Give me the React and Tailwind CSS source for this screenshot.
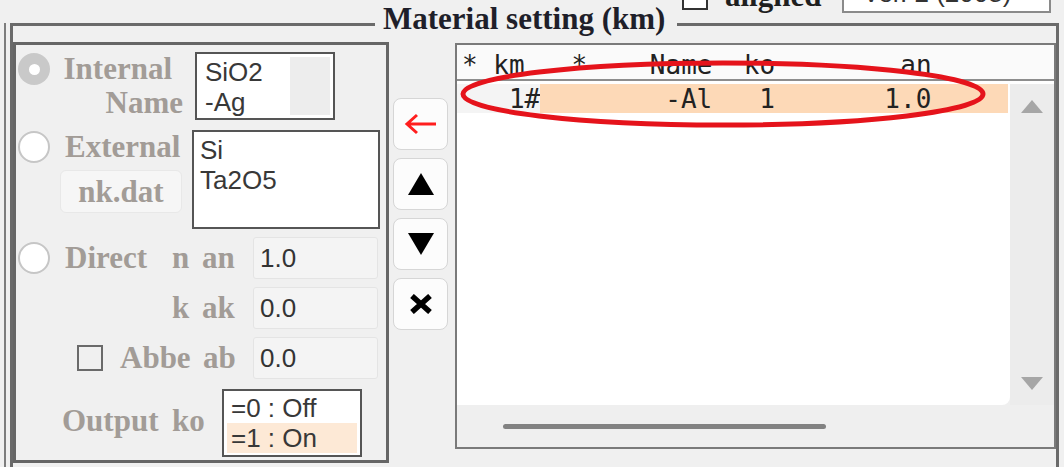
import React from 'react';

const serif = "font-['Liberation_Serif',serif] font-bold";
const mono = "font-['DejaVu_Sans_Mono',monospace]";

const Radio = ({ checked }) => (
  <div
    className={`w-[32px] h-[32px] rounded-full flex items-center justify-center shrink-0 ${
      checked ? 'bg-[#c9c9c9]' : 'bg-white border-2 border-[#c6c6c6]'
    }`}
  >
    {checked && <div className="w-[11px] h-[11px] rounded-full bg-white" />}
  </div>
);

const Label = ({ children, className = '' }) => (
  <span className={`${serif} text-[31px] leading-[34px] text-[#a29c97] whitespace-pre ${className}`}>{children}</span>
);

const Field = ({ value }) => (
  <div className="w-[125px] h-[42px] bg-[#f4f4f4] border border-[#e4e4e4] rounded-[3px] flex items-center pl-[6px] text-[26px] text-[#333]">
    {value}
  </div>
);

const SideButton = ({ children }) => (
  <div className="h-[52px] bg-[#fcfcfc] border-[1.5px] border-[#d6d6d6] rounded-[8px] flex items-center justify-center">
    {children}
  </div>
);

const App = () => {
  return (
    <div className="relative w-[1064px] h-[467px] overflow-hidden bg-[#f0f0f0] font-['Liberation_Sans',sans-serif]">
      {/* row above, cut off at the top edge */}
      <div className="h-[23px] overflow-hidden">
        <div className="flex items-end h-[37px] -mt-[24px]">
          <div className="ml-[682px] mb-[3px] w-[26px] h-[26px] border-2 border-[#333] bg-white" />
          <span className={`${serif} ml-[17px] text-[31px] leading-[34px] text-[#1f1f1f]`}>aligned</span>
          <div className="ml-[21px] w-[209px] h-[40px] border-2 border-[#8a8a8a] bg-white flex items-center pl-[18px] text-[26px] leading-[30px] text-[#333]">
            Ver. 2 (2008)
          </div>
        </div>
      </div>

      <div className="flex">
        <div className="w-[6px] h-[460px] border-r-2 border-[#7d7d7d]" />

        {/* Material setting group */}
        <div className="relative ml-[4px] w-[1049px] h-[460px] border-[3px] border-[#6a6a6a] pt-[16px] flex items-start">
          <div className={`${serif} absolute left-[362px] -top-[24px] bg-[#f0f0f0] pl-[8px] pr-[12px] text-[31px] leading-[34px] text-[#1f1f2a]`}>
            Material setting (km)
          </div>

          {/* left panel */}
          <div className="w-[376px] h-[421px] border-[3px] border-[#666] shrink-0 flex flex-col">
            {/* Internal */}
            <div className="flex items-start mt-[7px]">
              <div className="ml-[2px] mt-[1px]">
                <Radio checked />
              </div>
              <div className="ml-[15px] w-[118px] flex flex-col items-end">
                <Label className="pr-[11px]">Internal</Label>
                <Label>Name</Label>
              </div>
              <div className="ml-[12px] w-[140px] h-[68px] border-2 border-[#555] bg-white flex">
                <div className="flex-1 pl-[8px] pt-[3px] text-[26px] leading-[30px] text-[#383838]">
                  <div>SiO2</div>
                  <div>-Ag</div>
                </div>
                <div className="w-[40px] my-[3px] mr-[3px] bg-[#ededed]" />
              </div>
            </div>

            {/* External */}
            <div className="flex items-start mt-[10px]">
              <div className="w-[166px] shrink-0">
                <div className="flex items-start">
                  <div className="ml-[2px] mt-[1px]">
                    <Radio />
                  </div>
                  <Label className="ml-[15px]">External</Label>
                </div>
                <div className="mt-[6px] ml-[44px] w-[122px] h-[43px] bg-[#f6f6f6] border border-[#e8e8e8] rounded-[6px] flex items-center justify-center">
                  <Label>nk.dat</Label>
                </div>
              </div>
              <div className="ml-[10px] w-[188px] h-[99px] border-2 border-[#555] bg-white pl-[6px] pt-[3px] text-[26px] leading-[30px] text-[#383838]">
                <div>Si</div>
                <div>Ta2O5</div>
              </div>
            </div>

            {/* Direct */}
            <div className="flex items-center h-[42px] mt-[8px]">
              <div className="w-[49px] pl-[2px]">
                <Radio />
              </div>
              <Label className="w-[107px]">Direct</Label>
              <Label className="w-[30px]">n</Label>
              <Label className="w-[51px]">an</Label>
              <Field value="1.0" />
            </div>
            <div className="flex items-center h-[42px] mt-[8px]">
              <div className="w-[156px]" />
              <Label className="w-[30px]">k</Label>
              <Label className="w-[51px]">ak</Label>
              <Field value="0.0" />
            </div>
            <div className="flex items-center h-[42px] mt-[8px]">
              <div className="w-[104px] pl-[61px]">
                <div className="w-[26px] h-[26px] border-2 border-[#6a6a6a]" />
              </div>
              <Label className="w-[83px]">Abbe</Label>
              <Label className="w-[50px]">ab</Label>
              <Field value="0.0" />
            </div>

            {/* Output */}
            <div className="flex items-start mt-[10px]">
              <Label className="ml-[46px] w-[110px] mt-[15px]">Output</Label>
              <Label className="w-[50px] mt-[15px]">ko</Label>
              <div className="w-[140px] h-[68px] border-2 border-[#555] bg-white px-[3px] pt-[2px] text-[26px] leading-[30px] text-[#383838]">
                <div className="pl-[4px] h-[30px]">=0 : Off</div>
                <div className="pl-[4px] h-[30px] bg-[#fde9d6]">=1 : On</div>
              </div>
            </div>
          </div>

          {/* arrow buttons */}
          <div className="ml-[4px] w-[55px] pt-[56px] flex flex-col gap-[8px] shrink-0">
            <SideButton>
              <svg width="34" height="22" viewBox="0 0 34 22">
                <path d="M3 11 H32 M13 2 L3 11 L13 20" fill="none" stroke="#ff1e1e" strokeWidth="3" />
              </svg>
            </SideButton>
            <SideButton>
              <svg width="28" height="24" viewBox="0 0 28 24">
                <polygon points="14,1 27,23 1,23" fill="#000" />
              </svg>
            </SideButton>
            <SideButton>
              <svg width="28" height="24" viewBox="0 0 28 24">
                <polygon points="1,1 27,1 14,23" fill="#000" />
              </svg>
            </SideButton>
            <SideButton>
              <svg width="24" height="20" viewBox="0 0 24 20">
                <path d="M3 2 L21 18 M21 2 L3 18" fill="none" stroke="#000" strokeWidth="5.5" />
              </svg>
            </SideButton>
          </div>

          {/* km list */}
          <div className="ml-[7px] mt-[1px] flex-1 h-[406px] border-2 border-[#7a7a7a] flex flex-col">
            <div className={`${mono} h-[36px] bg-[#fafafa] border-b-2 border-[#8d8d8d] pl-[5px] pt-[7px] text-[26px] leading-[27px] text-[#222] whitespace-pre`}>
              {'* km   *    Name  ko        an'}
            </div>
            <div className="flex-1 flex flex-col bg-[#efefef]">
              <div className="h-[3px] bg-white" />
              <div className="flex h-[321px]">
                <div className="flex-1 bg-white rounded-br-[8px]">
                  <div className={`${mono} flex h-[29px] mr-[2px] text-[26px] leading-[30px] text-[#222] whitespace-pre`}>
                    <div className="w-[83px] pl-[5px] bg-[#f4f4f4]">{'   1#'}</div>
                    <div className="flex-1 bg-[#fdd9b7]">{'        -Al   1       1.0'}</div>
                  </div>
                </div>
                <div className="w-[44px] bg-[#ececec] flex flex-col items-center justify-between pt-[16px] pb-[15px]">
                  <svg width="22" height="13" viewBox="0 0 22 13">
                    <polygon points="11,0 22,13 0,13" fill="#a6a6a6" />
                  </svg>
                  <svg width="22" height="13" viewBox="0 0 22 13">
                    <polygon points="0,0 22,0 11,13" fill="#a6a6a6" />
                  </svg>
                </div>
              </div>
              <div className="h-[42px] flex items-center pl-[46px]">
                <div className="w-[323px] h-[5px] rounded-full bg-[#828282]" />
              </div>
            </div>
          </div>
        </div>
      </div>

      {/* red annotation ellipse */}
      <svg className="absolute left-0 top-0 pointer-events-none" width="1064" height="467">
        <ellipse cx="723" cy="94" rx="260" ry="31" fill="none" stroke="#e5131b" strokeWidth="5" />
      </svg>
    </div>
  );
};

export default App;
